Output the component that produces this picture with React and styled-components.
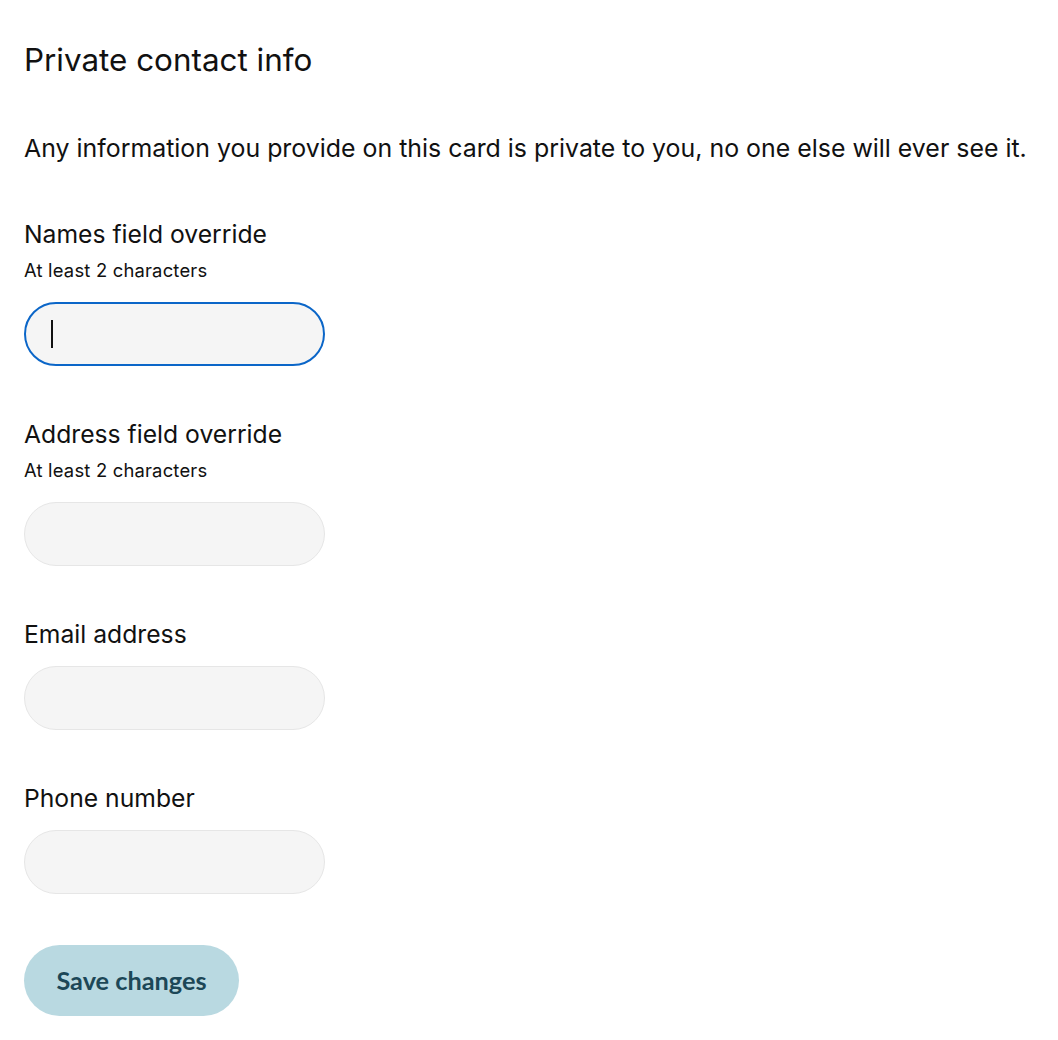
import React from "react";
import styled, { createGlobalStyle } from "styled-components";

const GlobalStyle = createGlobalStyle`
  body {
    margin: 0;
    background: #ffffff;
    font-family: Inter, "Noto Sans", sans-serif;
    color: #111111;
  }
`;

const Page = styled.div`
  padding: 40px 24px 24px;
  display: flex;
  flex-direction: column;
  align-items: flex-start;
`;

const Title = styled.h1`
  margin: 0;
  font-size: 31.4px;
  line-height: 40px;
  font-weight: 400;
  color: #111;
`;

const Description = styled.p`
  margin: 52px 0 0;
  font-size: 24.9px;
  line-height: 32px;
  white-space: nowrap;
  color: #111;
`;

const Form = styled.form`
  margin-top: 54px;
  display: flex;
  flex-direction: column;
  gap: 52px;
`;

const Field = styled.div`
  display: flex;
  flex-direction: column;
`;

const Label = styled.label`
  font-size: 24.7px;
  line-height: 32px;
  color: #111;
`;

const Hint = styled.span`
  margin-top: 8px;
  font-size: 18.4px;
  letter-spacing: 0.2px;
  line-height: 24px;
  color: #111;
`;

const InputWrap = styled.div`
  position: relative;
  margin-top: ${(p) => (p.$hasHint ? "20px" : "16px")};
  width: 301px;
  height: 64px;
`;

const Input = styled.input`
  box-sizing: border-box;
  width: 100%;
  height: 100%;
  padding: 0 26px;
  border-radius: 32px;
  background: #f5f5f5;
  border: ${(p) => (p.$active ? "2px solid #0b66c8" : "1px solid #e6e6e6")};
  font-family: inherit;
  font-size: 22px;
  color: #111;
  caret-color: transparent;
  outline: none;
`;

const Caret = styled.span`
  position: absolute;
  left: 27px;
  top: 18px;
  width: 2px;
  height: 28px;
  background: #111;
  pointer-events: none;
`;

const SaveButton = styled.button`
  margin-top: 51px;
  width: 215px;
  height: 71px;
  padding: 0 0 2px;
  border: none;
  border-radius: 36px;
  background: #b9d9e1;
  color: #1c4757;
  font-family: Lato, sans-serif;
  font-weight: 700;
  font-size: 25.3px;
  cursor: pointer;
`;

const fields = [
  { id: "names", label: "Names field override", hint: "At least 2 characters", active: true },
  { id: "address", label: "Address field override", hint: "At least 2 characters" },
  { id: "email", label: "Email address" },
  { id: "phone", label: "Phone number" },
];

function App() {
  return (
    <Page>
      <GlobalStyle />
      <Title>Private contact info</Title>
      <Description>
        Any information you provide on this card is private to you, no one else will ever see it.
      </Description>
      <Form onSubmit={(e) => e.preventDefault()}>
        {fields.map((f) => (
          <Field key={f.id}>
            <Label htmlFor={f.id}>{f.label}</Label>
            {f.hint && <Hint>{f.hint}</Hint>}
            <InputWrap $hasHint={!!f.hint}>
              <Input id={f.id} $active={f.active} autoFocus={f.active} />
              {f.active && <Caret />}
            </InputWrap>
          </Field>
        ))}
      </Form>
      <SaveButton type="button">Save changes</SaveButton>
    </Page>
  );
}

export default App;
